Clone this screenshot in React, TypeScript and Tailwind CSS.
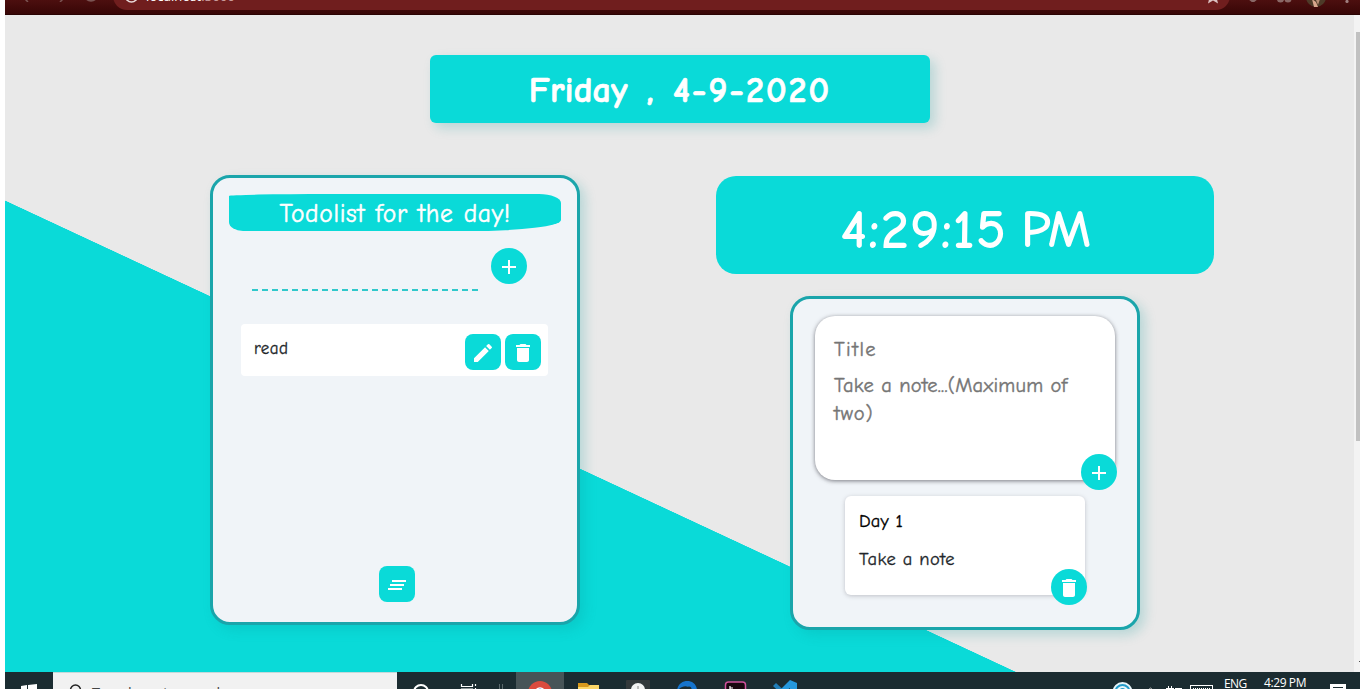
import type { ReactNode } from "react";
import { MdAdd, MdClearAll, MdDelete, MdEdit } from "react-icons/md";

const comic = "font-['Comic_Sans_MS','Comic_Neue','Open_Sans',sans-serif]";

function IconButton({ label, className, children }: { label: string; className: string; children: ReactNode }) {
  return (
    <button
      aria-label={label}
      className={`flex size-9 shrink-0 items-center justify-center bg-[#0adad8] text-white ${className}`}
    >
      {children}
    </button>
  );
}

function BrowserBar() {
  return (
    <header className="h-[15px] shrink-0 overflow-hidden bg-linear-to-b from-[#4c0f0f] to-[#360606]">
      <div className="-mt-[18px] flex h-[33px] w-full items-start border-b border-[#2a0303]">
        <div className="flex w-[108px] shrink-0 gap-4 pt-[4px] pl-[15px] text-[#7b5453]">
          <svg className="size-4" viewBox="0 0 16 16" fill="none" stroke="currentColor" strokeWidth="1.500">
            <path d="M14 8H3M8 2L2 8l6 6" transform="translate(0 2)" />
          </svg>
          <svg className="size-4" viewBox="0 0 16 16" fill="none" stroke="currentColor" strokeWidth="1.500">
            <path d="M2 8h11M8 2l6 6-6 6" transform="translate(0 2)" />
          </svg>
          <svg className="ml-[-1px] size-4" viewBox="0 0 16 16" fill="none" stroke="currentColor" strokeWidth="2">
            <circle cx="8" cy="8.5" r="6.3" />
          </svg>
        </div>
        <div className="flex h-7 w-[1117px] shrink-0 items-start rounded-full bg-[#701e1e] pl-[11px]">
          <svg className="mt-[6px] size-[15px] text-[#eadada]" viewBox="0 0 15 15" fill="none" stroke="currentColor" strokeWidth="1.6">
            <circle cx="7.5" cy="8" r="6" />
            <path d="M7.5 7v4" />
          </svg>
          <span className="mt-[5px] ml-[7px] font-['Open_Sans',sans-serif] text-[13px] leading-[18px] font-medium tracking-[0.1px] text-white">
            localhost<span className="text-[#c99a9a]">:3000</span>
          </span>
          <svg className="mt-[6px] mr-[9px] ml-auto size-4 text-[#dcc3c3]" viewBox="0 0 16 16" fill="currentColor">
            <path d="M8 0l2.2 5.3 5.8.5-4.4 3.8 1.4 5.9-5-3.1-5 3.1 1.4-5.9L0 5.800l5.800-.5z" />
          </svg>
        </div>
        <div className="flex flex-1 items-start pt-[4px] pl-[15px] text-[#8a6866]">
          <svg className="size-4" viewBox="0 0 16 16" fill="currentColor">
            <path d="M8 2a7 7 0 0 1 5 11L8 17 3 13A7 7 0 0 1 8 2z" />
          </svg>
          <svg className="ml-[15px] h-[17px] w-4" viewBox="0 0 16 17" fill="currentColor">
            <circle cx="4.500" cy="13" r="3.500" />
            <circle cx="12" cy="13" r="3.500" />
          </svg>
          <svg className="ml-[14px] h-[22px] w-5" viewBox="0 0 20 22">
            <circle cx="10" cy="11" r="10" fill="#4d3a28" />
            <path d="M6 13l4 3 2 5H8z" fill="#d8a58c" />
            <path d="M10 14l4-1-2 6z" fill="#b98d75" />
          </svg>
          <svg className="ml-[19px] h-[18px] w-1" viewBox="0 0 4 18" fill="#a08080">
            <circle cx="2" cy="15.500" r="1.600" />
          </svg>
        </div>
      </div>
    </header>
  );
}

function TodoCard() {
  return (
    <section className="flex h-[450px] w-[370px] shrink-0 flex-col rounded-[20px] border-[3px] border-[#1aa5ab] bg-[#f0f4f8] px-4 pt-4 shadow-[5px_5px_12px_rgba(10,150,150,0.22)]">
      <h2
        className={`${comic} flex h-[37px] items-center justify-center rounded-[100px_22px_90px_14px/2px_9px_11px_9px] bg-[#0adad8] pt-[3px] text-[25.5px] tracking-[0.65px] [word-spacing:1px] text-white [-webkit-text-stroke:0.5px_currentColor]`}
      >
        Todolist for the day!
      </h2>
      <div className="mt-[17px] flex pl-[23px]">
        <div className="mt-[41px] h-[2px] w-[226px] bg-[repeating-linear-gradient(90deg,#30c8cb_0_6px,transparent_6px_10px)]" />
        <IconButton label="Add todo" className="ml-[13px] rounded-full">
          <MdAdd className="mt-[2px] size-6" />
        </IconButton>
      </div>
      <div className="mt-[33px] ml-3 flex h-[52px] w-[307px] items-start gap-1 rounded bg-white pt-[10px] pr-[7px] pl-[13px]">
        <span className={`${comic} mr-auto text-[17px] leading-[29px] tracking-[0.4px] text-[#212529] [-webkit-text-stroke:0.3px_currentColor]`}>
          read
        </span>
        <IconButton label="Edit" className="rounded-lg">
          <MdEdit className="mt-[2px] size-6" />
        </IconButton>
        <IconButton label="Delete" className="rounded-lg">
          <MdDelete className="mt-[2px] size-6" />
        </IconButton>
      </div>
      <IconButton label="Clear all" className="mt-auto mr-auto mb-5 ml-[150px] rounded-lg">
        <MdClearAll className="mt-[2px] size-6" />
      </IconButton>
    </section>
  );
}

function NotesCard() {
  return (
    <section className="ml-[74px] h-[334px] w-[350px] rounded-[20px] border-[3px] border-[#1aa5ab] bg-[#f0f4f8] pt-[17px] pl-[22px] shadow-[5px_5px_12px_rgba(10,150,150,0.22)]">
      <div className="relative h-[164px] w-[300px] rounded-[20px] bg-white px-[19px] pt-[20px] shadow-[0_1px_4px_rgba(80,80,90,0.75)]">
        <p className={`${comic} text-[20.5px] leading-7 tracking-[1.4px] text-[#757575] [-webkit-text-stroke:0.4px_currentColor]`}>
          Title
        </p>
        <p className={`${comic} mt-2 text-[20.5px] leading-7 tracking-[0.25px] whitespace-nowrap text-[#757575] [-webkit-text-stroke:0.4px_currentColor]`}>
          Take a note...(Maximum of
          <br />
          <span className="tracking-[1px]">two)</span>
        </p>
        <IconButton label="Add note" className="absolute right-[-2px] bottom-[-10px] rounded-full">
          <MdAdd className="mt-[2px] size-6" />
        </IconButton>
      </div>
      <div className="relative mt-4 ml-[30px] h-[99px] w-[240px] rounded-md bg-white px-[14px] pt-[11px] shadow-[0_1px_4px_rgba(120,120,130,0.4)]">
        <p className={`${comic} text-[18.5px] leading-7 tracking-[0.2px] text-black [-webkit-text-stroke:0.3px_currentColor]`}>Day 1</p>
        <p className={`${comic} mt-[10px] text-[18.5px] leading-7 tracking-[0.45px] text-[#212529] [-webkit-text-stroke:0.3px_currentColor]`}>
          Take a note
        </p>
        <IconButton label="Delete note" className="absolute right-[-2px] bottom-[-10px] rounded-full">
          <MdDelete className="mt-[2px] size-6" />
        </IconButton>
      </div>
    </section>
  );
}

function Taskbar() {
  return (
    <footer className="flex h-[17px] shrink-0 items-start overflow-hidden bg-[#1b2c31] text-white">
      <div className="w-12 shrink-0 pt-[12px] pl-4">
        <svg className="h-4 w-4" viewBox="0 0 16 16" fill="currentColor">
          <path d="M0 2l6-1v7H0zM7 1l9-1v8H7zM0 9h6v6l-6-1zM7 9h9v7l-9-1z" />
        </svg>
      </div>
      <div className="flex h-10 w-[344px] shrink-0 items-start border-t border-[#c4d9da] bg-[#f1f1f1] pl-4 text-[#222]">
        <svg className="mt-[11px] h-[18px] w-4" viewBox="0 0 16 18" fill="none" stroke="currentColor" strokeWidth="1.500">
          <circle cx="6.500" cy="6" r="5" />
          <path d="M3 10l-3 4" />
        </svg>
        <span className="mt-[10px] ml-[7px] font-['Open_Sans',sans-serif] text-[14.5px] leading-5 whitespace-nowrap text-[#444]">
          Type here to search
        </span>
      </div>
      <div className="h-10 w-[119px] shrink-0 pt-3">
        <svg className="h-7 w-full" viewBox="0 0 119 28" fill="none" stroke="currentColor" strokeWidth="2">
          <circle cx="24" cy="8" r="7" />
          <path d="M64.500 0v2.500h11V0M78.500 0v2M78.500 4v4" strokeWidth="1.200" />
          <path d="M64.500 8V5h11v3" strokeWidth="1.200" />
          <path d="M102.500 0v8M105.500 0v8" stroke="#5b696c" strokeWidth="1" />
        </svg>
      </div>
      <div className="h-10 w-12 shrink-0 bg-[#475457] pt-[9px] pl-3">
        <svg className="size-6" viewBox="0 0 24 24">
          <circle cx="12" cy="12" r="12" fill="#da4b3e" />
          <path d="M0 12a12 12 0 0 0 12 12V12z" fill="#2ba24c" />
          <path d="M24 12a12 12 0 0 1-12 12V12z" fill="#f4c22d" />
          <circle cx="12" cy="12" r="5.800" fill="#fff" />
          <circle cx="12" cy="12" r="4.400" fill="#4779e4" />
        </svg>
      </div>
      <div className="h-10 w-[250px] shrink-0 pt-2">
        <svg className="h-8 w-full" viewBox="0 0 250 32">
          <path d="M14 3h9l2 2h10v22H14z" fill="#d7991c" />
          <path d="M14 7h10l2-2h9v22H14z" fill="#fbd667" />
          <rect x="62" y="0" width="24" height="24" rx="1" fill="#33393b" />
          <circle cx="74" cy="10" r="7" fill="#f3f3f3" />
          <path d="M74 6v4" stroke="#888" />
          <path d="M113 11C114-2 132-2 133 10h-6c-3-6-10-4-14 1z" fill="#1674cc" />
          <circle cx="125" cy="9" r="2.500" fill="#1b2c31" />
          <rect x="161.500" y="2" width="20" height="20" rx="3" fill="#18070f" stroke="#d0519c" strokeWidth="1.500" />
          <path d="M166 6v3M166 8h3" stroke="#fff" strokeWidth="1.200" />
          <path d="M209 6l3-3 14 13-3 3z" fill="#217eb8" />
          <path d="M226 0l7 3v24l-7 3-15-15z" fill="#2598dd" />
          <path d="M226 8v12l-8-6z" fill="#1b2c31" />
        </svg>
      </div>
      <div className="ml-auto flex h-10 w-[247px] shrink-0 items-start">
        <svg className="h-9 w-[96px] shrink-0 overflow-visible" viewBox="0 0 96 36" fill="none">
          <circle cx="9.500" cy="20" r="10" fill="#e7f5fa" />
          <circle cx="9.500" cy="20" r="7" stroke="#239bc9" strokeWidth="2" />
          <circle cx="9.500" cy="19" r="3" fill="#239bc9" />
          <path d="M35 18l2.500-2 2.500 2" stroke="#bbb" />
          <path d="M55.500 14v5M58.500 14v5M53 16.500h8M62 16.500h7" stroke="#fff" />
          <rect x="77.500" y="13.500" width="22" height="12" stroke="#fff" />
          <path d="M80 16.500h18" stroke="#fff" strokeDasharray="1 1" />
        </svg>
        <span className="mt-[4px] ml-[15px] w-[40px] font-['Open_Sans',sans-serif] text-[12px] leading-4 tracking-[-0.6px]">ENG</span>
        <span className="mt-[3px] font-['Open_Sans',sans-serif] text-[12px] leading-4 tracking-[-0.4px] whitespace-nowrap">4:29 PM</span>
        <svg className="mt-[12px] mr-[14px] ml-auto size-4 shrink-0" viewBox="0 0 16 16">
          <path d="M0 0h16v13H0z" fill="#fff" />
          <path d="M3 3.500h10M3 6.500h10" stroke="#1b2c31" />
        </svg>
      </div>
    </footer>
  );
}

export default function App() {
  return (
    <div className="flex h-[689px] w-[1360px] flex-col overflow-hidden bg-white pl-[5px]">
      <BrowserBar />
      <div className="flex h-[657px] shrink-0">
        <main className="flex h-full w-[1349px] flex-col bg-[linear-gradient(25deg,#0adad8_427px,#e9e9e9_427.6px)] pt-10 pl-[205px]">
          <h1
            className={`${comic} ml-[220px] flex h-[68px] w-[500px] shrink-0 items-center justify-center rounded-md bg-[#0adad8] pt-[4px] text-[36px] font-bold whitespace-pre text-white shadow-[5px_5px_12px_rgba(10,150,150,0.22)] [-webkit-text-stroke:0.7px_currentColor]`}
          >
            <span className="tracking-[0.2px] [word-spacing:6px]">Friday , </span>
            <span className="tracking-[2px]">4-9-2020</span>
          </h1>
          <div className="mt-[52px] flex items-start">
            <TodoCard />
            <div className="ml-[136px] pt-px">
              <div
                className={`${comic} mb-[22px] flex h-[98px] w-[498px] items-center justify-center rounded-[20px] bg-[#0adad8] pt-[10px] text-[53px] whitespace-pre text-white [-webkit-text-stroke:1.800px_currentColor]`}
              >
                <span className="tracking-[2.3px] [word-spacing:-6px]">4:29:15 </span>
                <span className="text-[51px] tracking-[-2px]">PM</span>
              </div>
              <NotesCard />
            </div>
          </div>
        </main>
        <div className="flex h-full w-[6px] flex-col bg-[#f3f3f3] pt-[17px] pl-[2px]">
          <div className="h-[409px] bg-[#c1c1c1]" />
          <div className="mt-auto mb-2.5 ml-[3px] h-px w-px bg-[#505050]" />
        </div>
      </div>
      <Taskbar />
    </div>
  );
}
